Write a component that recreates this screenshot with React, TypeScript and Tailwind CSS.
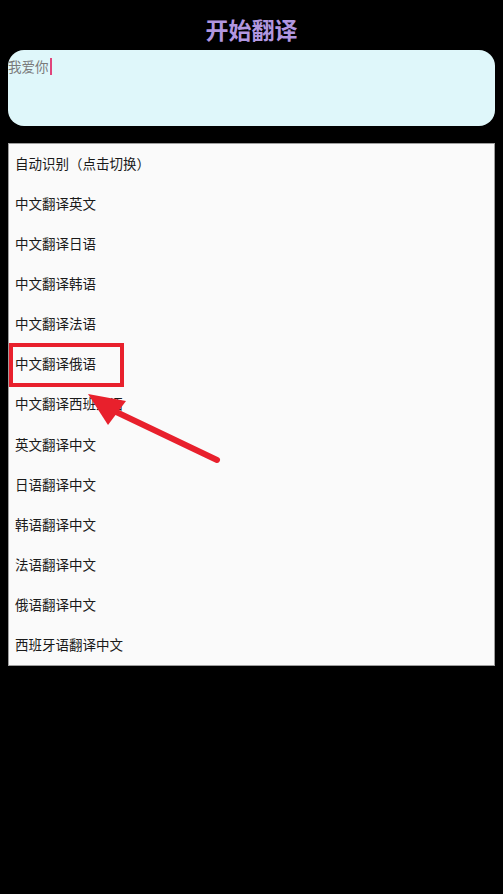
import React from "react";

const items = [
  "自动识别（点击切换）",
  "中文翻译英文",
  "中文翻译日语",
  "中文翻译韩语",
  "中文翻译法语",
  "中文翻译俄语",
  "中文翻译西班牙语",
  "英文翻译中文",
  "日语翻译中文",
  "韩语翻译中文",
  "法语翻译中文",
  "俄语翻译中文",
  "西班牙语翻译中文",
];

export default function App() {
  return (
    <div
      className="relative w-[503px] h-[894px] bg-black overflow-hidden"
      style={{ fontFamily: '"Noto Sans CJK SC", "Noto Sans", sans-serif' }}
    >
      <div className="h-[50px] flex items-end justify-center pb-[6px]">
        <span className="text-[23px] leading-[30px] font-semibold text-[#b197e0]">开始翻译</span>
      </div>
      <div className="mx-[8px] w-[487px] h-[76px] bg-[#dff7fa] rounded-[16px] pt-[6px]">
        <div className="flex items-center h-[20px]">
          <span className="text-[13.5px] leading-[20px] text-[#7a7a7a]">我爱你</span>
          <span className="w-[2px] h-[17px] bg-[#e0457b] ml-[1px]" />
        </div>
      </div>
      <div className="mt-[17px] mx-[8px] w-[487px] h-[523px] bg-[#fafafa] border border-[#9e9e9e]">
        {items.map((t) => (
          <div key={t} className="h-[40.15px] flex items-center pl-[6px] pb-[3px]">
            <span className="text-[13.5px] leading-[20px] text-[#1a1a1a]">{t}</span>
          </div>
        ))}
      </div>
      <svg className="absolute left-0 top-0" width="503" height="894" viewBox="0 0 503 894">
        <rect x="11" y="345" width="111" height="40" fill="none" stroke="#e8202c" strokeWidth="4" />
        <line x1="217" y1="460" x2="110" y2="409" stroke="#e8202c" strokeWidth="6" strokeLinecap="round" />
        <polygon points="88,394 126,401 108,425" fill="#e8202c" />
      </svg>
    </div>
  );
}
